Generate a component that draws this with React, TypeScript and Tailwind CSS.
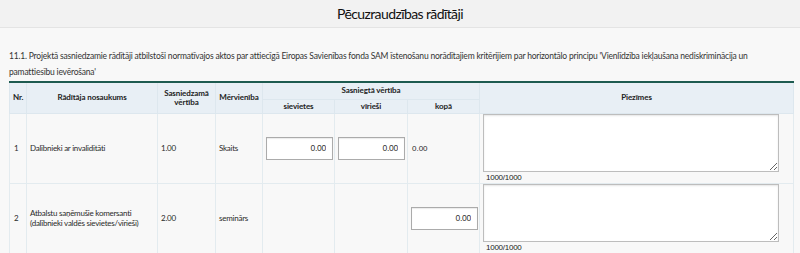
const rows = [
  { nr: '1', name: ['Dalībnieki ar invaliditāti'], target: '1.00', unit: 'Skaits', split: true },
  { nr: '2', name: ['Atbalstu saņēmušie komersanti', '(dalībnieki valdēs sievietes/vīrieši)'], target: '2.00', unit: 'seminārs', split: false },
]

const cell = 'border border-[#e3ebef] px-[3px]'
const head = 'border border-[#dde7ee] bg-[#e8eff5] font-bold text-[8px] text-[#222] text-center leading-[9px] tracking-[-0.1px]'

const NumInput = () => (
  <input
    readOnly
    value="0.00"
    className="w-[67px] h-[23px] border border-[#ababab] bg-white text-right pr-[6px] font-['Liberation_Sans',sans-serif] text-[8.5px] text-[#333] shadow-[inset_0_1px_1px_rgba(0,0,0,0.08)] outline-none"
  />
)

const Notes = () => (
  <div className="flex flex-col">
    <textarea readOnly className="w-[296px] h-[58px] border border-[#bdbdbd] bg-white shadow-[inset_0_1px_2px_rgba(0,0,0,0.1)] outline-none" />
    <span className="font-['Liberation_Sans',sans-serif] text-[8px] leading-[11px] text-[#222] pl-[3px]">1000/1000</span>
  </div>
)

export default function App() {
  return (
    <div className="w-[800px] h-[253px] overflow-hidden bg-[#f8f8f8] font-['Lato',sans-serif] text-[#2a2a2a]">
      <div className="h-[28px] bg-[#f2f2f2] border-b border-[#e4e4e4] flex items-center justify-center">
        <h1 className="text-[14px] tracking-[-0.6px] text-[#111] font-normal">Pēcuzraudzības rādītāji</h1>
      </div>
      <div className="px-[9px] pt-[20px]">
        <p className="text-[8.5px] leading-[16px] text-[#333] tracking-[-0.2px] whitespace-nowrap">
          11.1. Projektā sasniedzamie rādītāji atbilstoši normatīvajos aktos par attiecīgā Eiropas Savienības fonda SAM īstenošanu norādītajiem kritērijiem par horizontālo principu 'Vienlīdzība iekļaušana nediskriminācija un
          <br />
          pamattiesību ievērošana'
        </p>
        <table className="mt-[1px] w-[784px] border-collapse border-t-2 border-t-[#1e5b50] table-fixed">
          <colgroup>
            <col className="w-[17px]" />
            <col className="w-[131px]" />
            <col className="w-[58px]" />
            <col className="w-[47px]" />
            <col className="w-[72px]" />
            <col className="w-[73px]" />
            <col className="w-[72px]" />
            <col className="w-[314px]" />
          </colgroup>
          <thead>
            <tr className="h-[17px]">
              <th rowSpan={2} className={`${head} text-left pl-[3px]`}>Nr.</th>
              <th rowSpan={2} className={head}>Rādītāja nosaukums</th>
              <th rowSpan={2} className={head}>Sasniedzamā<br />vērtība</th>
              <th rowSpan={2} className={head}>Mērvienība</th>
              <th colSpan={3} className={head}>Sasniegtā vērtība</th>
              <th rowSpan={2} className={head}>Piezīmes</th>
            </tr>
            <tr className="h-[14px]">
              <th className={head}>sievietes</th>
              <th className={head}>vīrieši</th>
              <th className={head}>kopā</th>
            </tr>
          </thead>
          <tbody className="text-[8px] leading-[10px] tracking-[-0.25px]">
            {rows.map((r) => (
              <tr key={r.nr} className="h-[69px]">
                <td className={`${cell} pl-[4px]`}>{r.nr}</td>
                <td className={`${cell} whitespace-nowrap`}>
                  {r.name.map((l) => (
                    <div key={l}>{l}</div>
                  ))}
                </td>
                <td className={cell}>{r.target}</td>
                <td className={cell}>{r.unit}</td>
                <td className={`${cell} px-[2px]`}>{r.split && <NumInput />}</td>
                <td className={`${cell} px-[2px]`}>{r.split && <NumInput />}</td>
                <td className={`${cell} px-[2px]`}>
                  {r.split ? <span className="pl-[1px] font-['Liberation_Sans',sans-serif] text-[8px] tracking-normal">0.00</span> : <NumInput />}
                </td>
                <td className={`${cell} align-top pt-0`}>
                  <Notes />
                </td>
              </tr>
            ))}
          </tbody>
        </table>
      </div>
    </div>
  )
}
